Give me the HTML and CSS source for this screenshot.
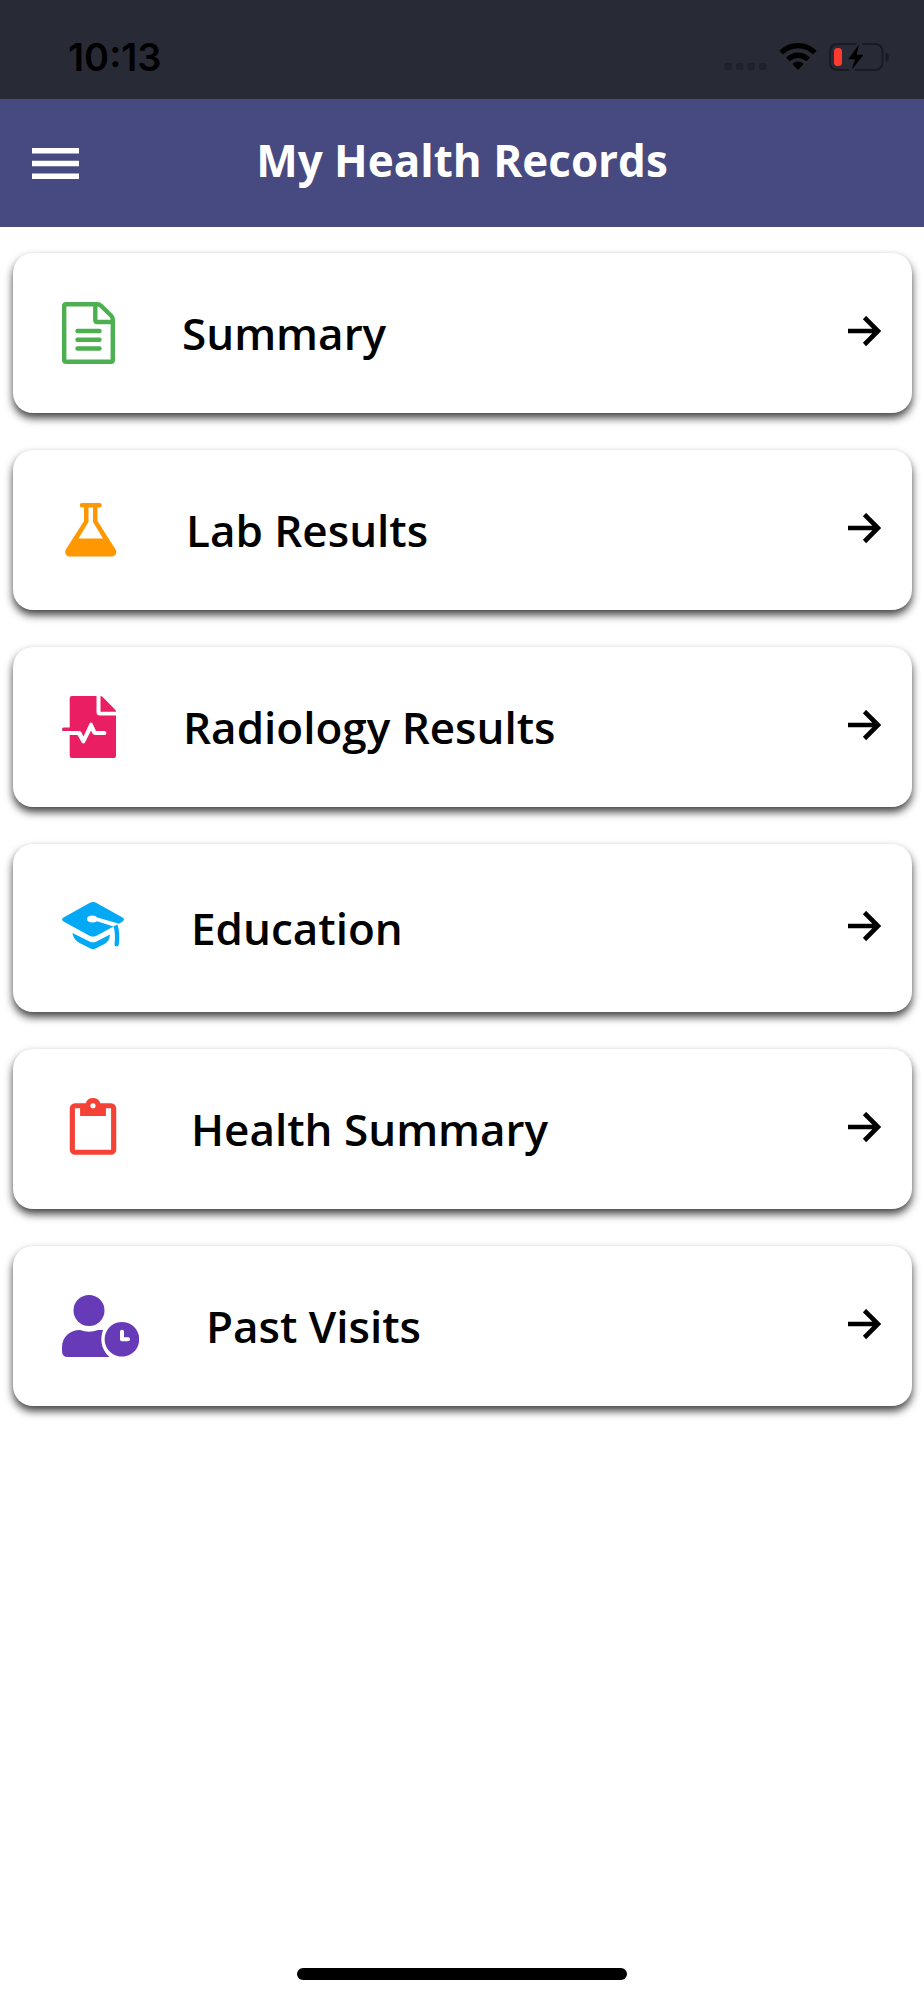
FILE: index.html
```html
<!DOCTYPE html>
<html lang="en">
  <head>
    <meta charset="UTF-8" />
    <meta name="viewport" content="width=device-width, initial-scale=1.0" />
    <title>My Health Records</title>
    <link rel="stylesheet" href="styles.css">
  </head>

  <body>
    <!-- Status bar -->
    <div class="status">
      <span class="status__time">10:13</span>
      <div class="status__icons">
        <svg class="status__signal" width="43" height="28" viewBox="0 0 43 28" aria-hidden="true">
          <rect x="0.5" y="20" width="7.5" height="7" rx="2" />
          <rect x="12" y="20" width="7.5" height="7" rx="2" />
          <rect x="23.5" y="20" width="7.5" height="7" rx="2" />
          <rect x="35" y="20" width="7.5" height="7" rx="2" />
        </svg>
        <svg class="status__wifi" width="38" height="28" viewBox="0 0 38 28" aria-hidden="true">
          <path d="M19 0C26 0 32.500 2.800 37.100 7.200Q37.700 7.900 37 8.600L34.600 11Q34 11.600 33.300 11A20.500 20.500 0 0 0 4.700 11Q4 11.600 3.400 11L1 8.600Q.3 7.900.9 7.200C5.500 2.800 12 0 19 0Z" />
          <path d="M19 9.400C23.400 9.400 27.400 11.100 30.400 14Q31 14.600 30.400 15.300L27.900 17.800Q27.300 18.400 26.600 17.800A11.500 11.500 0 0 0 11.400 17.800Q10.700 18.400 10.100 17.800L7.600 15.300Q7 14.600 7.600 14C10.600 11.100 14.600 9.400 19 9.400Z" />
          <path d="M19 18.600C21 18.600 22.700 19.300 24 20.500Q24.600 21.200 24 21.800L19.700 26.300Q19 27 18.300 26.300L14 21.800Q13.400 21.200 14 20.500C15.300 19.300 17 18.600 19 18.600Z" />
        </svg>
        <svg class="status__battery" width="60" height="28" viewBox="0 0 60 28" aria-hidden="true">
          <path class="battery__case" d="M27.500 1H9Q1 1 1 9V19Q1 27 9 27H20M26 27H45.500Q53.500 27 53.500 19V9Q53.500 1 45.500 1H33" />
          <path class="battery__cap" d="M56.500 9.500Q60 11 60 14.200T56.500 19Z" />
          <rect class="battery__level" x="5" y="5" width="8" height="18" rx="3.5" />
          <path d="M30 1.500L19.500 15.800Q19.300 16.300 20 16.300H26L22.800 26.500L34 12.500Q34.300 11.900 33.600 11.800H27.700Z" />
        </svg>
      </div>
    </div>

    <!-- Header -->
    <header class="header">
      <button class="header__menu" type="button" aria-label="Menu">
        <svg width="47" height="31" viewBox="0 0 47 31" aria-hidden="true">
          <path d="M0 0H47V5.500H0ZM0 12.800H47V18.200H0ZM0 25.500H47V31H0Z" />
        </svg>
      </button>
      <h1 class="header__title">My Health Records</h1>
    </header>

    <!-- Record list -->
    <main class="records">
      <a class="card" href="#summary">
        <svg class="card__icon card__icon--green" width="53" height="62" viewBox="0 0 53 62" aria-hidden="true">
          <path class="line" d="M4 2.200H35Q37.500 2.200 39 3.700L49 13.500Q50.800 15.200 50.800 18V58Q50.800 59.800 49 59.800H4Q2.200 59.800 2.200 58V4Q2.200 2.200 4 2.200ZM33.300 2.200V18Q33.300 20 35.300 20H50.800" />
          <path class="line line--round" d="M15.500 29H37.500M15.500 37.700H37.500M15.500 46.500H37.500" />
        </svg>
        <span class="card__title">Summary</span>
        <svg class="card__arrow" width="33" height="34" viewBox="0 0 33 34" aria-hidden="true">
          <path d="M0 15H30M16.500 1.500L30 15L16.500 28.500" />
        </svg>
      </a>

      <a class="card" href="#lab-results">
        <svg class="card__icon card__icon--orange" width="57" height="62" viewBox="0 0 57 62" aria-hidden="true">
          <path fill-rule="evenodd" d="M20 4H37.500A2.200 2.200 0 0 1 37.500 8.500H35.500V22L53 49.500C56 54 53.500 57.500 49.500 57.500H8C4 57.500 1.500 54 4.500 49.500L22 22V8.500H20A2.200 2.200 0 0 1 20 4ZM26.500 8.500V23L16.500 39.500H41L31 23V8.500Z" />
        </svg>
        <span class="card__title">Lab Results</span>
        <svg class="card__arrow" width="33" height="34" viewBox="0 0 33 34" aria-hidden="true">
          <path d="M0 15H30M16.500 1.500L30 15L16.500 28.500" />
        </svg>
      </a>

      <a class="card" href="#radiology-results">
        <svg class="card__icon card__icon--pink" width="54" height="62" viewBox="0 0 54 62" aria-hidden="true">
          <path d="M10 0H34.500V16Q34.500 19.500 38 19.500H54V60Q54 62 52 62H10Q7.700 62 7.700 60V39H15.500L19.700 46.500Q21.500 48.500 23 46.500L29 34.500L30.500 37.500Q31.500 38.900 33 38.900H42.500A1.900 1.900 0 0 0 42.500 35.100H34L30.500 27.500Q29 25.500 27.500 27.500L21.500 40.500L19.500 36.500Q18.700 35.100 17 35.100H1.500Q0 35.100 0 33.500T1.500 31.400H7.700V2Q7.700 0 10 0Z" />
          <path d="M38.500 0Q39.800 0 40.700.9L53 13.500Q54 14.500 54 15.700H38.500Z" />
        </svg>
        <span class="card__title">Radiology Results</span>
        <svg class="card__arrow" width="33" height="34" viewBox="0 0 33 34" aria-hidden="true">
          <path d="M0 15H30M16.500 1.500L30 15L16.500 28.500" />
        </svg>
      </a>

      <a class="card card--tall" href="#education">
        <svg class="card__icon card__icon--blue" width="62" height="62" viewBox="0 0 62 62" aria-hidden="true">
          <path d="M27.500 6Q31 4 34.500 6L60.500 20.500Q63.300 22.500 60.500 24.500L57 26.800L35.500 20.500Q33.500 18.500 30.500 18.500C27 18.500 25 20 25 22S27 25.500 30.500 25.500Q33 25.500 35 24.300L51.500 29.500L34.500 38.700Q31 40.500 27.500 38.700L1.500 24.500Q-1.300 22.500 1.500 20.500Z" />
          <path d="M10.500 36L28 44.700Q31 46 34 44.700L48 37.500C47.800 42 46 45 42.500 47L33.500 51.500Q31 53 28.500 51.500L19.500 47C14.500 44.500 11 41 10.500 36Z" />
          <path d="M51.500 29.300L55.500 27.600C57.500 34 57.700 41 56.800 47.500Q56.500 49.500 54.500 49.500T52.500 47.500C53.300 41 53.200 35 51.500 29.300Z" />
        </svg>
        <span class="card__title">Education</span>
        <svg class="card__arrow" width="33" height="34" viewBox="0 0 33 34" aria-hidden="true">
          <path d="M0 15H30M16.500 1.500L30 15L16.500 28.500" />
        </svg>
      </a>

      <a class="card" href="#health-summary">
        <svg class="card__icon card__icon--red" width="62" height="62" viewBox="0 0 24 24" aria-hidden="true">
          <path d="M19 2H14.820A3 3 0 0 0 9.180 2H5A2 2 0 0 0 3 4V20A2 2 0 0 0 5 22H19A2 2 0 0 0 21 20V4A2 2 0 0 0 19 2M12 2A1 1 0 1 1 12 4A1 1 0 0 1 12 2M19 20H5V4H7V7H17V4H19Z" />
        </svg>
        <span class="card__title">Health Summary</span>
        <svg class="card__arrow" width="33" height="34" viewBox="0 0 33 34" aria-hidden="true">
          <path d="M0 15H30M16.500 1.500L30 15L16.500 28.500" />
        </svg>
      </a>

      <a class="card" href="#past-visits">
        <svg class="card__icon card__icon--purple" width="77" height="62" viewBox="0 0 77 62" aria-hidden="true">
          <circle cx="27" cy="15.500" r="15.500" />
          <path d="M18 35Q27 38.500 36 35H41C38 43.500 38.500 54 47.500 62H6Q0 62 0 56V52C0 42 8 35 18 35Z" />
          <path fill-rule="evenodd" d="M60 27A17.300 17.300 0 1 1 59.900 27ZM60 34.700Q58 34.700 58 36.500V44.500Q58 46.300 60 46.300H66Q68 46.300 68 44.300T66 42.300H62V36.500Q62 34.700 60 34.700Z" />
        </svg>
        <span class="card__title">Past Visits</span>
        <svg class="card__arrow" width="33" height="34" viewBox="0 0 33 34" aria-hidden="true">
          <path d="M0 15H30M16.500 1.500L30 15L16.500 28.500" />
        </svg>
      </a>
    </main>

    <div class="home-indicator"></div>
  </body>
</html>
```

FILE: styles.css
```css
* {
  box-sizing: border-box;
}

body {
  display: flex;
  flex-direction: column;
  min-height: 100vh;
  margin: 0;
  background-color: #fff;
  color: #000;
  font-family: "Open Sans", "Noto Sans", sans-serif;
}

svg {
  display: block;
  flex: none;
}

/* Status bar */
.status {
  display: flex;
  justify-content: space-between;
  align-items: center;
  padding: 34px 35px 19px 68px;
  background-color: #282a36;
}

.status__time {
  font-family: Inter, "Liberation Sans", sans-serif;
  font-size: 38px;
  font-weight: 600;
  line-height: 46px;
}

.status__icons {
  display: flex;
  gap: 12px;
}

.status__signal {
  fill: #20212c;
}

.battery__case {
  fill: none;
  stroke: #191a22;
  stroke-width: 2;
}

.battery__cap {
  fill: #191a22;
}

.battery__level {
  fill: #ff3b30;
}

/* Header */
.header {
  display: grid;
  grid-template-columns: 47px 1fr 47px;
  align-items: center;
  padding: 30px 32px 36px;
  background-color: #464a80;
}

.header__menu {
  padding: 6px 0 0;
  border: none;
  background: none;
  cursor: pointer;
}

.header__menu svg {
  fill: #fff;
}

.header__title {
  margin: 0;
  color: #fff;
  font-size: 44px;
  font-weight: 700;
  line-height: 62px;
  text-align: center;
}

/* Record list */
.records {
  display: flex;
  flex-direction: column;
  gap: 37px;
  padding: 26px 12px 37px 13px;
}

.card {
  display: flex;
  align-items: center;
  min-height: 160px;
  padding: 0 31px 0 49px;
  border-radius: 20px;
  background-color: #fff;
  box-shadow: 0 5px 8px rgba(0, 0, 0, 0.75);
  color: inherit;
  text-decoration: none;
}

.card--tall {
  min-height: 168px;
}

.card__icon {
  fill: currentColor;
}

.card__icon--green {
  color: #4caf50;
}

.card__icon--orange {
  color: #ff9800;
}

.card__icon--pink {
  color: #e91e63;
}

.card__icon--blue {
  color: #03a9f4;
}

.card__icon--red {
  color: #f44336;
}

.card__icon--purple {
  color: #673ab7;
}

.line {
  fill: none;
  stroke: currentColor;
  stroke-width: 4.4;
}

.line--round {
  stroke-linecap: round;
}

.card__title {
  flex: 1;
  margin-left: 67px;
  font-size: 44px;
  font-weight: 600;
  line-height: 62px;
}

.card__arrow {
  fill: none;
  stroke: #000;
  stroke-width: 4.6;
}

.home-indicator {
  width: 330px;
  max-width: 50%;
  height: 12px;
  margin: auto auto 20px;
  border-radius: 6px;
  background-color: #000;
}
```
